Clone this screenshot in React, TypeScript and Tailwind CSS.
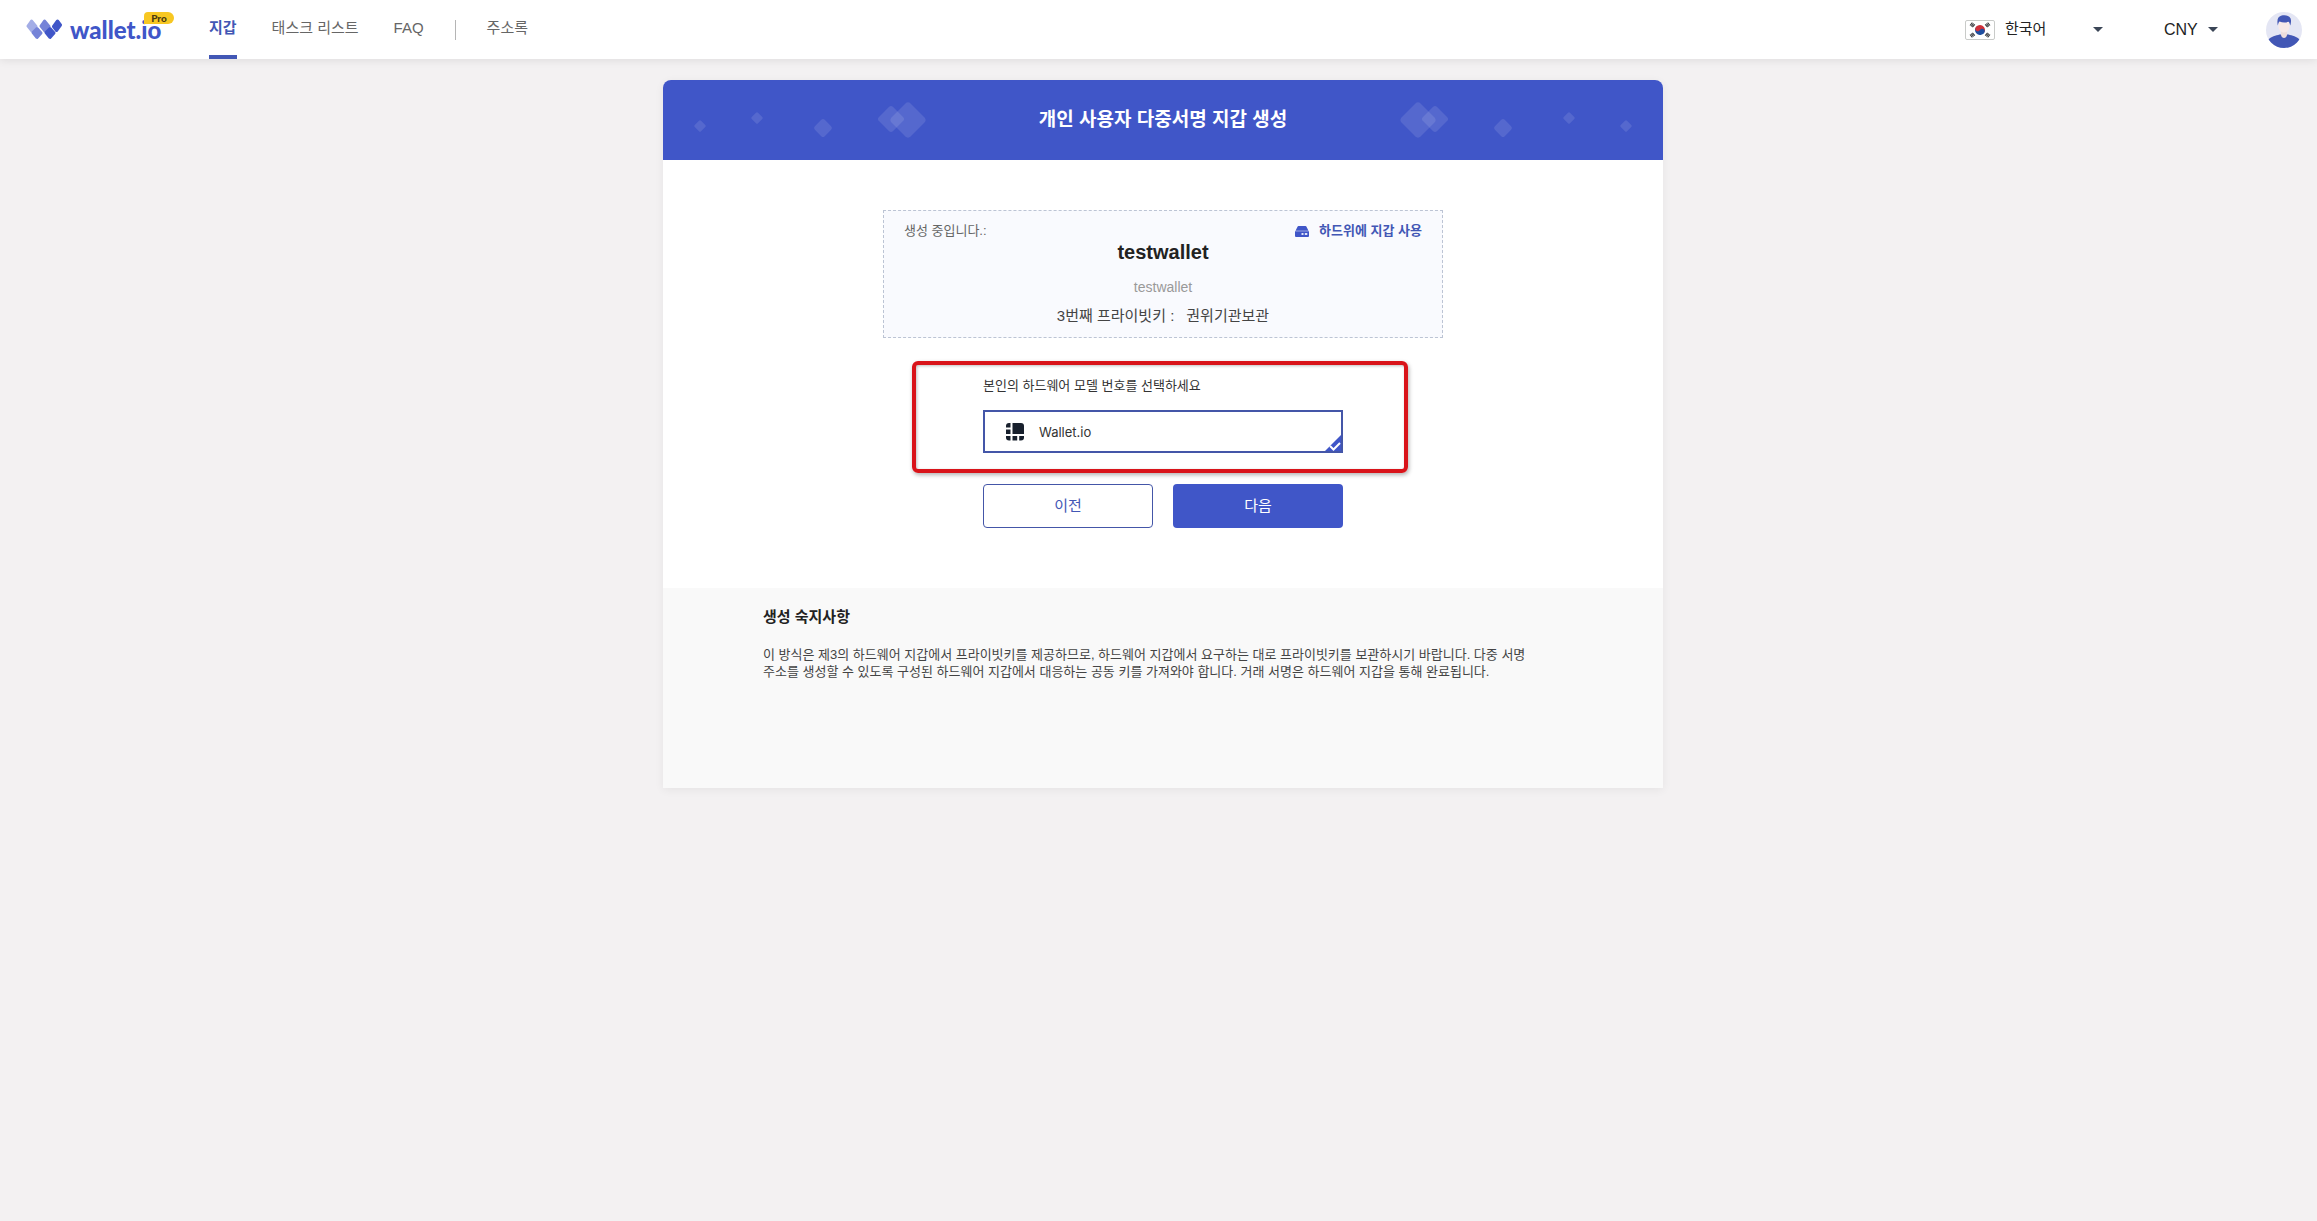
import React from "react";

const Logo = () => (
  <svg viewBox="0 0 36 21" className="h-[21px] w-9" aria-hidden="true">
    <g strokeLinejoin="round" strokeWidth="3">
      <path d="M5.500 2 L10 7.500 L6 12 L2 7 Z" fill="#a3ade6" stroke="#a3ade6" />
      <path d="M18.500 2 L23 7.500 L19 12 L15 7 Z" fill="#7583d8" stroke="#7583d8" />
      <path d="M11 9.500 L15 14 L11 18.500 L7 13.500 Z" fill="#7583d8" stroke="#7583d8" />
      <path d="M24 9.500 L28 14 L24 18.500 L20 13.500 Z" fill="#4056c8" stroke="#4056c8" />
      <path d="M31.500 2 L34.500 6 L30.500 11.500 L27.500 7.500 Z" fill="#4056c8" stroke="#4056c8" />
    </g>
  </svg>
);

const Flag = () => (
  <svg viewBox="0 0 30 20" className="h-5 w-[30px] shrink-0" aria-hidden="true">
    <rect x="0.5" y="0.5" width="29" height="19" rx="1.5" fill="#fff" stroke="#c9cbc9" />
    <g transform="rotate(30 15 10)">
      <path d="M10 10 a5 5 0 0 1 10 0 Z" fill="#d0313b" />
      <path d="M10 10 a5 5 0 0 0 10 0 Z" fill="#1f4fa0" />
      <circle cx="12.5" cy="10" r="2.5" fill="#d0313b" />
      <circle cx="17.5" cy="10" r="2.5" fill="#1f4fa0" />
    </g>
    <g stroke="#33363a" strokeWidth="1.1">
      <path d="M5 5.5 L7.4 2.6 M6.2 6.4 L8.6 3.5 M7.4 7.2 L9.8 4.4" />
      <path d="M25 5.5 L22.6 2.6 M23.8 6.4 L21.4 3.5 M22.6 7.2 L20.2 4.4" />
      <path d="M5 14.5 L7.4 17.4 M6.2 13.6 L8.6 16.5 M7.4 12.8 L9.8 15.6" />
      <path d="M25 14.5 L22.6 17.4 M23.8 13.6 L21.4 16.5 M22.6 12.8 L20.2 15.6" />
    </g>
  </svg>
);

const Caret = () => (
  <svg viewBox="0 0 10 5" className="pointer-events-none h-[5px] w-[10px] shrink-0" aria-hidden="true">
    <path d="M0 0 H10 L5 5 Z" fill="#3b4657" />
  </svg>
);

const Avatar = () => (
  <svg viewBox="0 0 36 36" className="size-9" aria-hidden="true">
    <clipPath id="avatar-clip">
      <circle cx="18" cy="18" r="18" />
    </clipPath>
    <g clipPath="url(#avatar-clip)">
      <rect width="36" height="36" fill="#e4e6f4" />
      <path d="M2 28 C5 24.5 10 23.5 13.5 22.5 H22.5 C26 23.5 31 24.5 34 28 V36 H2 Z" fill="#4257b5" />
      <path d="M15 17 H21 V22.5 C21 27 15 27 15 22.5 Z" fill="#ecdcdc" />
      <path d="M12.5 9 C12.5 6 23.5 6 23.5 9 V14 C23.5 18 21 20.5 18 20.5 C15 20.5 12.5 18 12.5 14 Z" fill="#f6e9e8" />
      <path d="M11.8 13.5 C10.5 7 12.5 4.5 15 3.8 C20 2.5 25.5 4 25 9 C25 11 24.6 12.5 24.2 13.5 C23.8 11.5 23.3 10.5 22.5 9.8 C19 11 16 10.5 13.5 9.5 C12.5 10.5 12.2 12 11.8 13.5 Z" fill="#4257b5" />
    </g>
  </svg>
);

const HardwareIcon = () => (
  <svg viewBox="0 0 14 11" className="h-[11px] w-3.5" aria-hidden="true">
    <path d="M3.5 0 H10.5 Q11.2 0 11.500 0.700 L13.500 4.800 H0.500 L2.500 0.700 Q2.800 0 3.500 0 Z" fill="#4056c8" />
    <path d="M0 5.300 H14 V10 Q14 11 13 11 H1 Q0 11 0 10 Z" fill="#4056c8" />
    <path d="M6.500 7 H8.500 V9 H6.500 Z M9.800 7 H12.300 V9 H9.800 Z" fill="#dfe3f8" />
  </svg>
);

const DeviceIcon = () => (
  <svg viewBox="0 0 18 18" className="size-[18px]" fill="#18202d" aria-hidden="true">
    <path d="M3 0 H4.5 V4.5 H0 V3 Q0 0 3 0 Z" />
    <path d="M6.5 0 H15 Q18 0 18 3 V11 H6.5 Z" />
    <path d="M0 6.5 H4.5 V11 H0 Z" />
    <path d="M0 13 H4.5 V17.5 H3 Q0 17.5 0 14.5 Z" />
    <path d="M6.5 13 H11.2 V17.5 H6.5 Z" />
    <path d="M13.2 13 H18 V14.5 Q18 17.5 15 17.5 H13.2 Z" />
  </svg>
);

const HeaderDiamonds = ({ className }: { className: string }) => (
  <svg viewBox="0 0 264 80" className={className} fill="#fff" fillOpacity="0.11" aria-hidden="true">
    <rect x="-4.5" y="-4.5" width="9" height="9" rx="1.5" transform="translate(37 46) rotate(45)" />
    <rect x="-4.5" y="-4.5" width="9" height="9" rx="1.5" transform="translate(94 38) rotate(45)" />
    <rect x="-7" y="-7" width="14" height="14" rx="2.5" transform="translate(160 48) rotate(45)" />
    <rect x="-10" y="-10" width="20" height="20" rx="3" transform="translate(228 39) rotate(45)" />
    <rect x="-13.5" y="-13.5" width="27" height="27" rx="4" transform="translate(245 40) rotate(45)" />
  </svg>
);

const navLink = "flex h-full items-center pb-0.5 text-[15px] text-[#666]";

export default function App() {
  return (
    <div className="min-h-screen bg-[#f3f1f2] font-['Liberation_Sans','Noto_Sans_CJK_KR',sans-serif] text-[#222]">
      <header className="relative flex h-[59px] items-center bg-white pr-[15px] pl-[26px] shadow-[0_2px_8px_rgba(0,0,0,0.08)]">
        <a href="#" className="relative flex items-center gap-2">
          <Logo />
          <span className="w-[95px] font-['Lato',sans-serif] text-[24px] leading-3 font-black text-[#4056c8]">wallet.io</span>
          <span className="absolute -top-[7px] left-[118px] flex h-3 w-[30px] items-center justify-center rounded-tl rounded-r-md bg-[#f7c722] font-['Lato',sans-serif] text-[10px] leading-3 font-black text-[#4a3a10]">
            Pro
          </span>
        </a>
        <nav className="ml-11 flex h-full items-center">
          <a href="#" aria-current="page" className="flex h-full items-center border-b-4 border-[#4257b5] pt-0.5 text-[15px] font-bold text-[#4257b5]">
            지갑
          </a>
          <a href="#" className={`${navLink} ml-[35px]`}>태스크 리스트</a>
          <a href="#" className={`${navLink} ml-[35px]`}>FAQ</a>
          <span className="ml-[31px] h-5 w-px bg-[#b5b5b5]" />
          <a href="#" className={`${navLink} ml-[31px]`}>주소록</a>
        </nav>
        <div className="ml-auto flex items-center">
          <div className="relative flex items-center">
            <Flag />
            <select aria-label="언어" className="ml-2.5 w-[88px] appearance-none bg-transparent text-[15px] outline-none">
              <option>한국어</option>
            </select>
            <Caret />
          </div>
          <div className="ml-[61px] flex items-center">
            <select aria-label="통화" className="w-[44px] appearance-none bg-transparent text-base outline-none">
              <option>CNY</option>
            </select>
            <Caret />
          </div>
          <button type="button" aria-label="계정" className="ml-12">
            <Avatar />
          </button>
        </div>
      </header>

      <main className="py-[21px] pl-[9px]">
        <div className="mx-auto max-w-[1000px] overflow-hidden rounded-t-lg bg-white shadow-[0_2px_10px_rgba(0,0,0,0.06)]">
          <div className="relative flex h-20 items-center justify-center bg-[#4056c8]">
            <HeaderDiamonds className="absolute top-0 left-0 h-20 w-[264px]" />
            <HeaderDiamonds className="absolute top-0 right-0 h-20 w-[264px] -scale-x-100" />
            <h1 className="text-[19px] font-bold text-white">개인 사용자 다중서명 지갑 생성</h1>
          </div>

          <div className="flex flex-col items-center pt-[50px] pb-[60px]">
            <section className="flex h-32 w-full max-w-[560px] flex-col border border-dashed border-[#bcc4d4] bg-[#f9fafe] px-5 pt-2.5">
              <div className="flex h-5 items-center justify-between text-[13px]">
                <span className="text-[#666]">생성 중입니다.:</span>
                <span className="flex items-center gap-2.5 font-bold text-[#4257b5]">
                  <HardwareIcon />
                  하드위에 지갑 사용
                </span>
              </div>
              <h2 className="text-center text-xl leading-[22px] font-bold">testwallet</h2>
              <p className="mt-3.5 text-center text-sm leading-5 text-[#999]">testwallet</p>
              <p className="mt-[9px] flex justify-center gap-3 text-[15px] leading-5 text-[#444]">
                <span>3번째 프라이빗키 :</span>
                <span>권위기관보관</span>
              </p>
            </section>

            <form className="relative mt-[38px] w-full max-w-[360px]" onSubmit={(e) => e.preventDefault()}>
              <div className="pointer-events-none absolute -top-[15px] -right-[65px] -left-[71px] h-[112px] rounded-md border-4 border-[#d9141a] shadow-[1px_2px_4px_rgba(0,0,0,0.3),inset_1px_1px_3px_rgba(0,0,0,0.25)]" />
              <fieldset>
                <legend className="text-[13px] leading-5 text-[#333]">본인의 하드웨어 모델 번호를 선택하세요</legend>
                <label className="relative mt-3.5 flex h-[43px] items-center gap-[15px] border-2 border-[#4456a8] pl-[21px] text-[#333]">
                  <input type="radio" name="device" defaultChecked className="sr-only" />
                  <DeviceIcon />
                  <span className="pt-0.5 font-['Inter',sans-serif] text-[13px]">Wallet.io</span>
                  <svg viewBox="0 0 16 16" className="absolute right-0 bottom-0 size-4" aria-hidden="true">
                    <path d="M16 0 V16 H0 Z" fill="#4056c8" />
                    <path d="M5 11 L8.500 14.500 L15 8" fill="none" stroke="#fff" strokeWidth="2" />
                  </svg>
                </label>
              </fieldset>
              <div className="mt-[31px] grid grid-cols-2 gap-5 text-[15px]">
                <button type="button" className="h-11 rounded border border-[#4456a8] bg-white text-[#4257b5]">이전</button>
                <button type="submit" className="h-11 rounded bg-[#4056c8] text-white">다음</button>
              </div>
            </form>
          </div>

          <section className="min-h-[200px] bg-[#f9f9f9] px-[100px] pt-[19px]">
            <h3 className="text-[15px] leading-5 font-bold">생성 숙지사항</h3>
            <p className="mt-[19px] text-[13px] leading-[17px] break-keep text-[#444]">
              이 방식은 제3의 하드웨어 지갑에서 프라이빗키를 제공하므로, 하드웨어 지갑에서 요구하는 대로 프라이빗키를 보관하시기 바랍니다. 다중 서명 주소를 생성할 수 있도록 구성된 하드웨어 지갑에서 대응하는 공동 키를 가져와야 합니다. 거래 서명은 하드웨어 지갑을 통해 완료됩니다.
            </p>
          </section>
        </div>
      </main>
    </div>
  );
}
